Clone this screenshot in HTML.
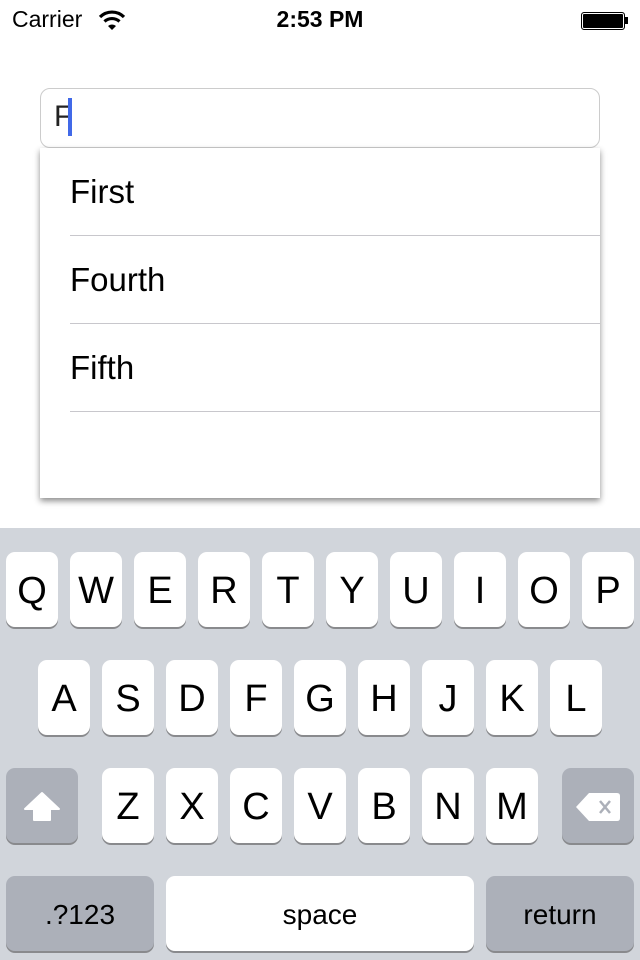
<html><head><style>
body{margin:0;width:640px;height:960px;background:#fff;position:relative;overflow:hidden;font-family:"Liberation Sans",sans-serif}
.a{position:absolute}
.k{position:absolute;width:52px;height:75px;background:#fff;border-radius:9px;box-shadow:0 2px 0 #898a8d;font-size:38px;text-align:center;line-height:78px;color:#000}
.g{background:#acb0b9}
</style></head><body>
<div class="a" style="left:12px;top:6px;font-size:23px">Carrier</div>
<svg class="a" style="left:98px;top:9px" width="28" height="22" viewBox="0 0 28 22"><path d="M2 8 A17 17 0 0 1 26 8" stroke="#000" stroke-width="3.2" fill="none"/><path d="M6.5 12.5 A11 11 0 0 1 21.5 12.5" stroke="#000" stroke-width="3.2" fill="none"/><path d="M10 17 L14 21 L18 17 A6 6 0 0 0 10 17Z" fill="#000"/></svg>
<div class="a" style="left:0;width:640px;text-align:center;top:6px;font-size:23px;font-weight:bold">2:53 PM</div>
<div class="a" style="left:581px;top:12px;width:42px;height:16px;border:1px solid #000;border-radius:3px;background:#000;box-shadow:inset 0 0 0 1px #fff"></div>
<div class="a" style="left:625px;top:17px;width:3px;height:7px;background:#000"></div>
<div class="a" style="left:40px;top:88px;width:558px;height:58px;border:1px solid #ccc;border-radius:10px"></div>
<div class="a" style="left:54px;top:100px;font-size:30px;color:#222">F</div>
<div class="a" style="left:68px;top:98px;width:4px;height:38px;background:#4169e8"></div>
<div class="a" style="left:40px;top:148px;width:560px;height:350px;background:#fff;box-shadow:0 3px 6px rgba(0,0,0,.45)">
<div class="a" style="left:30px;top:25px;font-size:33px">First</div>
<div class="a" style="left:30px;top:87px;width:530px;height:1px;background:#c8c7cc"></div>
<div class="a" style="left:30px;top:113px;font-size:33px">Fourth</div>
<div class="a" style="left:30px;top:175px;width:530px;height:1px;background:#c8c7cc"></div>
<div class="a" style="left:30px;top:201px;font-size:33px">Fifth</div>
<div class="a" style="left:30px;top:263px;width:530px;height:1px;background:#c8c7cc"></div>
</div>
<div class="a" style="left:0;top:528px;width:640px;height:432px;background:#d1d5db"></div>
<div class="k" style="left:6px;top:552px">Q</div><div class="k" style="left:70px;top:552px">W</div><div class="k" style="left:134px;top:552px">E</div><div class="k" style="left:198px;top:552px">R</div><div class="k" style="left:262px;top:552px">T</div><div class="k" style="left:326px;top:552px">Y</div><div class="k" style="left:390px;top:552px">U</div><div class="k" style="left:454px;top:552px">I</div><div class="k" style="left:518px;top:552px">O</div><div class="k" style="left:582px;top:552px">P</div>
<div class="k" style="left:38px;top:660px">A</div><div class="k" style="left:102px;top:660px">S</div><div class="k" style="left:166px;top:660px">D</div><div class="k" style="left:230px;top:660px">F</div><div class="k" style="left:294px;top:660px">G</div><div class="k" style="left:358px;top:660px">H</div><div class="k" style="left:422px;top:660px">J</div><div class="k" style="left:486px;top:660px">K</div><div class="k" style="left:550px;top:660px">L</div>
<div class="k g" style="left:6px;top:768px;width:72px"><svg width="40" height="34" viewBox="0 0 40 34" style="margin-top:22px"><path d="M20 3 L37 19 L28 19 L28 30 L12 30 L12 19 L3 19 Z" fill="#fff" stroke="#fff" stroke-linejoin="round" stroke-width="2"/></svg></div>
<div class="k" style="left:102px;top:768px">Z</div><div class="k" style="left:166px;top:768px">X</div><div class="k" style="left:230px;top:768px">C</div><div class="k" style="left:294px;top:768px">V</div><div class="k" style="left:358px;top:768px">B</div><div class="k" style="left:422px;top:768px">N</div><div class="k" style="left:486px;top:768px">M</div>
<div class="k g" style="left:562px;top:768px;width:72px"><svg width="46" height="34" viewBox="0 0 46 34" style="margin-top:22px"><path d="M14 3 L42 3 Q45 3 45 6 L45 28 Q45 31 42 31 L14 31 L1 17 Z" fill="#fff"/><path d="M25 11 L35 23 M35 11 L25 23" stroke="#acb0b9" stroke-width="2.5"/></svg></div>
<div class="k g" style="left:6px;top:876px;width:148px;font-size:28px">.?123</div>
<div class="k" style="left:166px;top:876px;width:308px;font-size:28px">space</div>
<div class="k g" style="left:486px;top:876px;width:148px;font-size:28px">return</div>
</body></html>
